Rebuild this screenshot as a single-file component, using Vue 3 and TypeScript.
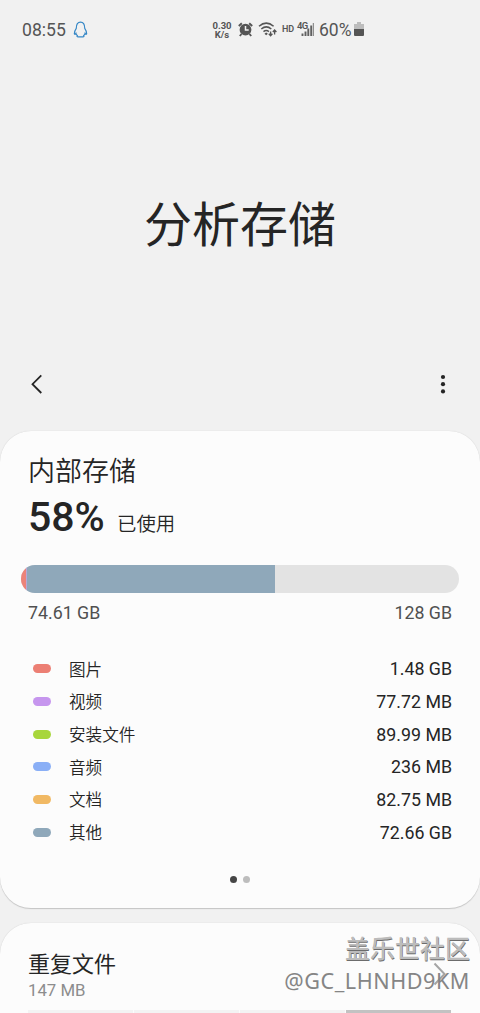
<script setup lang="ts">
interface Category {
  label: string
  size: string
  color: string
}

const categories: Category[] = [
  { label: '图片', size: '1.48 GB', color: '#ec7f74' },
  { label: '视频', size: '77.72 MB', color: '#c696ee' },
  { label: '安装文件', size: '89.99 MB', color: '#a8d63c' },
  { label: '音频', size: '236 MB', color: '#8aaff6' },
  { label: '文档', size: '82.75 MB', color: '#f1b964' },
  { label: '其他', size: '72.66 GB', color: '#8fa8ba' },
]

const segments = [
  { color: '#ec8379', width: 1.1 },
  { color: '#b9a6d6', width: 0.2 },
  { color: '#8fa8ba', width: 56.7 },
]

const thumbnails = [false, false, false, true]
</script>

<template>
  <main class="screen">
    <header class="status">
      <span class="clock">08:55</span>
      <svg class="penguin" viewBox="0 0 14 16">
        <path d="M3 7C3 3 4.500 1 7 1s4 2 4 6c1 1.500 2 3 1.800 5-.3.800-1 .400-1.500-.300-.2 1-.6 1.500-1.300 2 .6.700.3 1.200-.700 1.200H4.700c-1 0-1.300-.5-.7-1.200-.7-.5-1.100-1-1.300-2-.5.700-1.200 1.100-1.500.300C1 10 2 8.500 3 7Z" />
      </svg>
      <span class="speed"><span>0.30</span><span>K/s</span></span>
      <svg class="alarm" viewBox="0 0 15 15">
        <circle cx="7.500" cy="7.700" r="5.900" fill="#555" />
        <path d="M.8 4 3.800 1.200M14.200 4 11.200 1.200M3.500 12 1.800 14M11.500 12l1.700 2" stroke="#555" stroke-width="1.900" />
        <path d="M7.500 4v4h3.200" stroke="#f1f1f1" stroke-width="1.500" fill="none" />
      </svg>
      <svg class="wifi" viewBox="0 0 19 15">
        <path d="M1 4.300q7.300-6.300 14.600 0M3.300 7q5-4.200 10 0M5.500 9.700q2.700-2.200 5.400 0" fill="none" stroke="#555" stroke-width="1.500" />
        <path d="m6.500 11.800 1.700-1.300 1.700 1.300-1.700 1.500Z" fill="#555" />
        <path d="M12.600 9.500v4m-1.800-1.800 1.800 2 1.800-2M16.600 12.500V8m-1.800 2 1.800-2 1.800 2" fill="none" stroke="#555" stroke-width="1.300" />
      </svg>
      <span class="hd">HD</span>
      <span class="signal">
        <svg viewBox="0 0 17 15">
          <path d="M5.500 11.500V14M8.500 9.500V14M11.300 6.500V14M14.200 3.500V14" stroke="#606060" stroke-width="1.900" />
          <path d="M16.300 1v13" stroke="#777" stroke-width="1" />
        </svg>
        <span class="network">4G</span>
      </span>
      <span class="percent">60%</span>
      <svg class="battery" viewBox="0 0 10 15">
        <path d="M3 0h4v2h3v5H0V2h3Z" fill="#bdbdbd" />
        <path d="M0 7h10v6q0 1-1 1H1q-1 0-1-1Z" fill="#555" />
      </svg>
    </header>

    <h1 class="title">分析存储</h1>

    <nav class="toolbar">
      <svg class="back" viewBox="0 0 12 20"><path d="M10.300 1.400 1.500 10.200l8.800 8.800" /></svg>
      <svg class="more" viewBox="0 0 6 20">
        <circle cx="3" cy="3" r="2.100" /><circle cx="3" cy="10.200" r="2.100" /><circle cx="3" cy="17.400" r="2.100" />
      </svg>
    </nav>

    <section class="card storage">
      <h2 class="heading">内部存储</h2>
      <div class="used"><strong>58%</strong><span>已使用</span></div>
      <div class="bar">
        <i v-for="(s, i) in segments" :key="i" :style="{ width: s.width + '%', background: s.color }"></i>
      </div>
      <div class="totals"><span>74.61 GB</span><span>128 GB</span></div>
      <ul class="legend">
        <li v-for="c in categories" :key="c.label">
          <i class="swatch" :style="{ background: c.color }"></i>
          <span class="name">{{ c.label }}</span>
          <span class="size">{{ c.size }}</span>
        </li>
      </ul>
      <div class="pager"><i class="active"></i><i></i></div>
    </section>

    <section class="card duplicates">
      <h2 class="subheading">重复文件</h2>
      <p class="amount">147 MB</p>
      <div class="thumbs">
        <i v-for="(filled, i) in thumbnails" :key="i" :class="{ filled }"></i>
      </div>
      <svg class="chevron" viewBox="0 0 14 24"><path d="m1.500 1.500 10 10.500-10 10.500" /></svg>
      <div class="mark">
        <span class="community">盖乐世社区</span>
        <span class="user">@GC_LHNHD9KM</span>
      </div>
    </section>
  </main>
</template>

<style>
body {
  margin: 0;
  background: #f1f1f1;
}
</style>

<style scoped>
.screen {
  box-sizing: border-box;
  width: 480px;
  height: 1013px;
  overflow: hidden;
  background: #f1f1f1;
  color: #252525;
  font-family: Roboto, "Noto Sans CJK SC", sans-serif;
}
.status {
  display: flex;
  align-items: center;
  height: 59px;
  padding-left: 22px;
  color: #555;
}
.clock {
  width: 51px;
  font-size: 17.6px;
  line-height: 20px;
}
.penguin {
  width: 15px;
  height: 17px;
  fill: none;
  stroke: #3587c6;
  stroke-width: 1.1;
}
.speed {
  display: flex;
  flex-direction: column;
  width: 20px;
  margin-left: 124px;
  font-size: 9.5px;
  font-weight: 700;
  line-height: 9px;
  text-align: center;
}
.alarm {
  width: 15px;
  height: 15px;
  margin: -1px 0 0 6px;
}
.wifi {
  width: 19px;
  height: 15px;
  margin-left: 5px;
}
.hd {
  width: 13px;
  margin: -2px 0 0 5px;
  font-size: 9px;
  font-weight: 600;
}
.signal {
  position: relative;
  width: 17px;
  height: 15px;
  margin-left: 2px;
}
.signal svg {
  display: block;
  width: 17px;
  height: 15px;
}
.network {
  position: absolute;
  top: -1px;
  left: 0;
  font-size: 9.5px;
  font-weight: 600;
  line-height: 9px;
  letter-spacing: -0.6px;
}
.percent {
  width: 33px;
  margin-left: 5px;
  font-size: 17.5px;
}
.battery {
  width: 10px;
  height: 15px;
  margin-left: 2px;
}
.title {
  margin: 135px 0 0;
  font-size: 48px;
  font-weight: 400;
  line-height: 64px;
  text-align: center;
}
.toolbar {
  display: flex;
  align-items: center;
  justify-content: space-between;
  height: 40px;
  margin: 106px 34px 0 31px;
}
.back {
  width: 12px;
  height: 20px;
  fill: none;
  stroke: #252525;
  stroke-width: 1.8;
}
.more {
  width: 6px;
  height: 20px;
  fill: #252525;
}
.card {
  box-sizing: border-box;
  position: relative;
  border-radius: 31px;
  background: #fcfcfc;
  box-shadow: 0 0.5px 1px #c4c4c4;
}
.storage {
  height: 477px;
  margin-top: 27px;
  padding: 22px 28px 0;
}
.heading {
  margin: 0;
  font-size: 27px;
  font-weight: 350;
  line-height: 38px;
}
.used {
  display: flex;
  align-items: baseline;
  height: 50px;
  margin-top: 1px;
  line-height: 50px;
}
.used strong {
  width: 89px;
  font-size: 41px;
  font-weight: 500;
}
.used span {
  font-size: 19.4px;
  font-weight: 350;
}
.bar {
  display: flex;
  height: 28px;
  margin: 23px -7px 0;
  overflow: hidden;
  border-radius: 14px;
  background: #e3e3e3;
}
.totals {
  display: flex;
  justify-content: space-between;
  margin-top: 8px;
  color: #505050;
  font-size: 17.8px;
  line-height: 24px;
}
.legend {
  margin: 28px 0 0;
  padding: 0;
  list-style: none;
}
.legend li {
  display: flex;
  align-items: center;
  height: 32.65px;
}
.swatch {
  width: 18px;
  height: 9px;
  margin: -1px 0 0 5px;
  border-radius: 4.5px;
}
.name {
  margin: 3px 0 0 18px;
  font-size: 16.6px;
  font-weight: 350;
  line-height: 24px;
}
.size {
  margin-left: auto;
  font-size: 17.8px;
  line-height: 24px;
}
.pager {
  display: flex;
  justify-content: center;
  gap: 6px;
  margin-top: 27px;
}
.pager i {
  width: 7px;
  height: 7px;
  border-radius: 50%;
  background: #bdbdbd;
}
.pager .active {
  background: #454545;
}
.duplicates {
  height: 140px;
  margin-top: 15px;
  padding: 26px 28px 0;
}
.subheading {
  margin: 0;
  font-size: 22px;
  font-weight: 400;
  line-height: 32px;
}
.amount {
  margin: -1px 0 0;
  color: #8d8d8d;
  font-size: 16.8px;
  line-height: 20px;
}
.thumbs {
  display: flex;
  gap: 1px;
  margin: 10px 1px 0 0;
}
.thumbs i {
  flex: 1;
  height: 80px;
  background: #f3f3f3;
}
.thumbs .filled {
  background: #c2c2c2;
}
.chevron {
  position: absolute;
  top: 39px;
  right: 33px;
  width: 14px;
  height: 24px;
  fill: none;
  stroke: #a5a5a5;
  stroke-width: 2;
}
.mark {
  display: flex;
  position: absolute;
  top: 11px;
  right: 10px;
  flex-direction: column;
  align-items: flex-end;
  color: #858585;
  white-space: nowrap;
}
.community {
  color: #bcbcbc;
  font-size: 25px;
  font-weight: 500;
  line-height: 32px;
  text-shadow: 0.5px 1px 0 #6c6c6c;
}
.user {
  font-family: "Noto Sans", sans-serif;
  font-size: 21.6px;
  font-weight: 400;
  line-height: 30px;
  letter-spacing: 0.55px;
}
</style>
